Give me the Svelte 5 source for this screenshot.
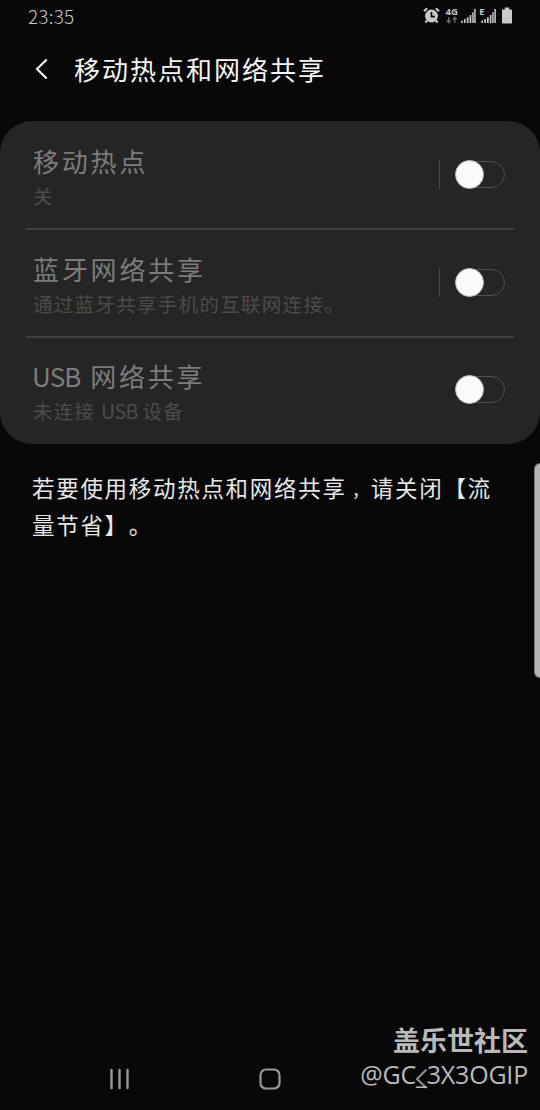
<script lang="ts">
  type Item = {
    id: string;
    title: string;
    sub: string;
    /** row opens its own page, so the switch sits behind a thin rule */
    split: boolean;
  };

  const items: Item[] = [
    { id: 'hotspot', title: '移动热点', sub: '关', split: true },
    { id: 'bluetooth', title: '蓝牙网络共享', sub: '通过蓝牙共享手机的互联网连接。', split: true },
    { id: 'usb', title: 'USB 网络共享', sub: '未连接 USB 设备', split: false },
  ];

  // latin runs are spaced tighter than the han text around them
  const runs = (s: string) => s.split(/(USB )/).filter(Boolean);
</script>

<div class="screen" lang="zh-CN">
  <div class="status">
    <span class="time">23:35</span>
    <svg class="tray" width="94" height="24" viewBox="0 0 94 24" aria-hidden="true">
      <g fill="none" stroke="#c9c9c9">
        <circle cx="11.5" cy="11" r="5.6" fill="#c9c9c9" stroke-width="1.6" />
        <path d="M4 6.2 7.2 3.2M19 6.2 15.8 3.2" stroke-width="2.2" />
        <path d="M7.5 15 5.3 17.6M15.5 15 17.7 17.6" stroke-width="2" />
        <path d="M11.5 7v4.6h3.4" stroke="#080808" stroke-width="1.6" />
      </g>
      <text x="25.6" y="9.6" textLength="12.4" lengthAdjust="spacingAndGlyphs">4G</text>
      <path d="M28.7 12v5.5M26.8 15.4l1.9 2.2 1.9-2.2M34.7 18v-5.5M32.8 14.6l1.9-2.2 1.9 2.2" fill="none" stroke="#666" stroke-width="1.5" />
      <g fill="#c9c9c9">
        <path d="M41.2 15.4h1.6V18h-1.6zM44 14h1.6v4H44zM46.8 12.2h1.7V18h-1.7zM49.6 10h1.7v8h-1.7zM52.2 7.2h1.5V18h-1.5zM54.2 4h1.5v14h-1.5z" />
        <path d="M61.4 15.4H63V18h-1.6zM64.2 14h1.6v4h-1.6zM67 12.2h1.7V18H67zM69.8 10h1.6v8h-1.6zM72.2 7.2h1.5V18h-1.5zM74.4 4h1.5v14h-1.5z" />
        <path d="M84.8 2.6h4.4v2h1.8c.7 0 1 .3 1 1v11.8c0 .7-.3 1-1 1h-8c-.7 0-1-.3-1-1V5.6c0-.7.3-1 1-1h1.8z" />
      </g>
      <text x="59.2" y="9.6">E</text>
    </svg>
  </div>

  <header>
    <svg width="14" height="22" viewBox="0 0 14 22" aria-hidden="true">
      <path d="M12.7 1.5 3 11l9.7 9.5" fill="none" stroke="#f5f5f5" stroke-width="2.1" />
    </svg>
    <h1>移动热点和网络共享</h1>
  </header>

  <section class="card">
    {#each items as it (it.id)}
      <div class="row">
        <div class="label">
          <div class="title">{#each runs(it.title) as r}<span class:latin={r === 'USB '}>{r}</span>{/each}</div>
          <div class="sub">{#each runs(it.sub) as r}<span class:latin={r === 'USB '}>{r}</span>{/each}</div>
        </div>
        {#if it.split}<i class="rule"></i>{/if}
        <button class="switch" role="switch" aria-checked="false" aria-label={it.title}>
          <span class="knob"></span>
        </button>
      </div>
    {/each}
  </section>

  <p class="note">若要使用移动热点和网络共享<span class="comma">，</span>请关闭【流<br />量节省】。</p>

  <nav>
    <svg width="22" height="22" viewBox="0 0 22 22" aria-hidden="true">
      <path d="M2.5 2v18M10.5 2v18M18.5 2v18" stroke="#999" stroke-width="2.4" stroke-linecap="round" />
    </svg>
    <svg width="22" height="22" viewBox="0 0 22 22" aria-hidden="true">
      <rect x="1.5" y="1.5" width="19" height="19" rx="5.5" fill="none" stroke="#999" stroke-width="2.2" />
    </svg>
    <svg width="14" height="22" viewBox="0 0 14 22" aria-hidden="true">
      <path d="M12.5 1.5 3 11l9.5 9" fill="none" stroke="#8c8c8c" stroke-width="2.2" />
    </svg>
  </nav>

  <div class="edge"></div>
  <div class="mark">
    <strong>盖乐世社区</strong>
    <span>@GC_3X3OGIP</span>
  </div>
</div>

<style>
  :global(body) { background: #080808; }

  .screen {
    position: relative;
    width: 540px; height: 1110px;
    display: flex; flex-direction: column;
    overflow: hidden;
    background: #080808; color: #f5f5f5;
    font-family: 'Noto Sans CJK SC', sans-serif;
    font-kerning: none;
    text-spacing-trim: space-all;
  }

  .status {
    height: 34px; box-sizing: border-box;
    padding: 5px 26px 0 28px;
    display: flex; justify-content: space-between; align-items: flex-start;
  }
  .time { margin-top: -1px; font-size: 19px; font-weight: 300; line-height: 24px; letter-spacing: .2px; color: #c4c4c4; }
  .tray text { font: 700 9.5px 'Open Sans', sans-serif; fill: #c9c9c9; }

  header {
    height: 87px; box-sizing: border-box;
    padding: 18px 0 0 34px;
    display: flex; align-items: flex-start; gap: 26px;
  }
  header svg { margin-top: 6px; }
  h1 { margin: 0; font-size: 26px; font-weight: 400; line-height: 34px; letter-spacing: 2px; }

  .card {
    height: 322.5px; box-sizing: border-box;
    padding: 1.5px 26px 0;
    border-radius: 32px;
    background: #252525;
  }
  .row {
    height: 107.5px; box-sizing: border-box;
    padding: 0 9px 1.5px 7px;
    display: flex; align-items: center;
    border-bottom: 2px solid #404040;
  }
  .row:last-child { height: 105.5px; border-bottom: 0; }
  .label { flex: 1; padding-top: 5px; }
  .title, .sub { white-space: pre; }
  .title { font-size: 26px; line-height: 38px; letter-spacing: 2.8px; color: #7c7c7c; }
  .sub { font-size: 19.5px; line-height: 32px; letter-spacing: 1.3px; color: #4c4c4c; }
  .title .latin { margin: 0 5px 0 -1px; letter-spacing: -1px; }
  .sub .latin { margin-right: 1px; letter-spacing: -.6px; }
  .rule { width: 1px; height: 29px; margin-right: 15px; background: #4a4a4a; }

  .switch {
    width: 50px; height: 29px; box-sizing: border-box;
    padding: 0; border: 0; background: none;
    display: grid; align-items: center;
  }
  .switch::before {
    content: ''; grid-area: 1 / 1;
    height: 27px; box-sizing: border-box; margin-left: 2px;
    border: 1.5px solid #4f4f4f; border-radius: 14px;
  }
  .knob {
    grid-area: 1 / 1;
    width: 29px; height: 29px; box-sizing: border-box;
    border: 1px solid #b5b5b5; border-radius: 50%;
    background: #fafafa;
  }

  .note {
    margin: 25px 0 0 32px;
    font-size: 22.5px; line-height: 37px; letter-spacing: 1.7px;
    white-space: nowrap; color: #e6e6e6;
  }
  /* narrower cell, pushed right so the comma sits mid-cell */
  .comma { margin-left: 5.5px; font-size: 17px; line-height: 1; }

  nav {
    margin-top: auto; height: 62px; box-sizing: border-box;
    padding: 20px 0 0 109px;
    display: grid; grid-template-columns: 150px 155px 14px; align-items: start;
  }

  .edge {
    position: absolute; right: 0; top: 463px;
    width: 6px; height: 215px; box-sizing: border-box;
    border: 1px solid #777; border-right: 0; border-radius: 6px 0 0 6px;
    background: #b4b4b4;
  }
  .mark {
    position: absolute; right: 12px; top: 1022px;
    display: flex; flex-direction: column; align-items: flex-end;
    color: #b9b9b9;
  }
  .mark strong { font-size: 27px; font-weight: 700; line-height: 36px; }
  .mark span { font: 400 25px/32px 'Open Sans', sans-serif; letter-spacing: -.2px; }
</style>
